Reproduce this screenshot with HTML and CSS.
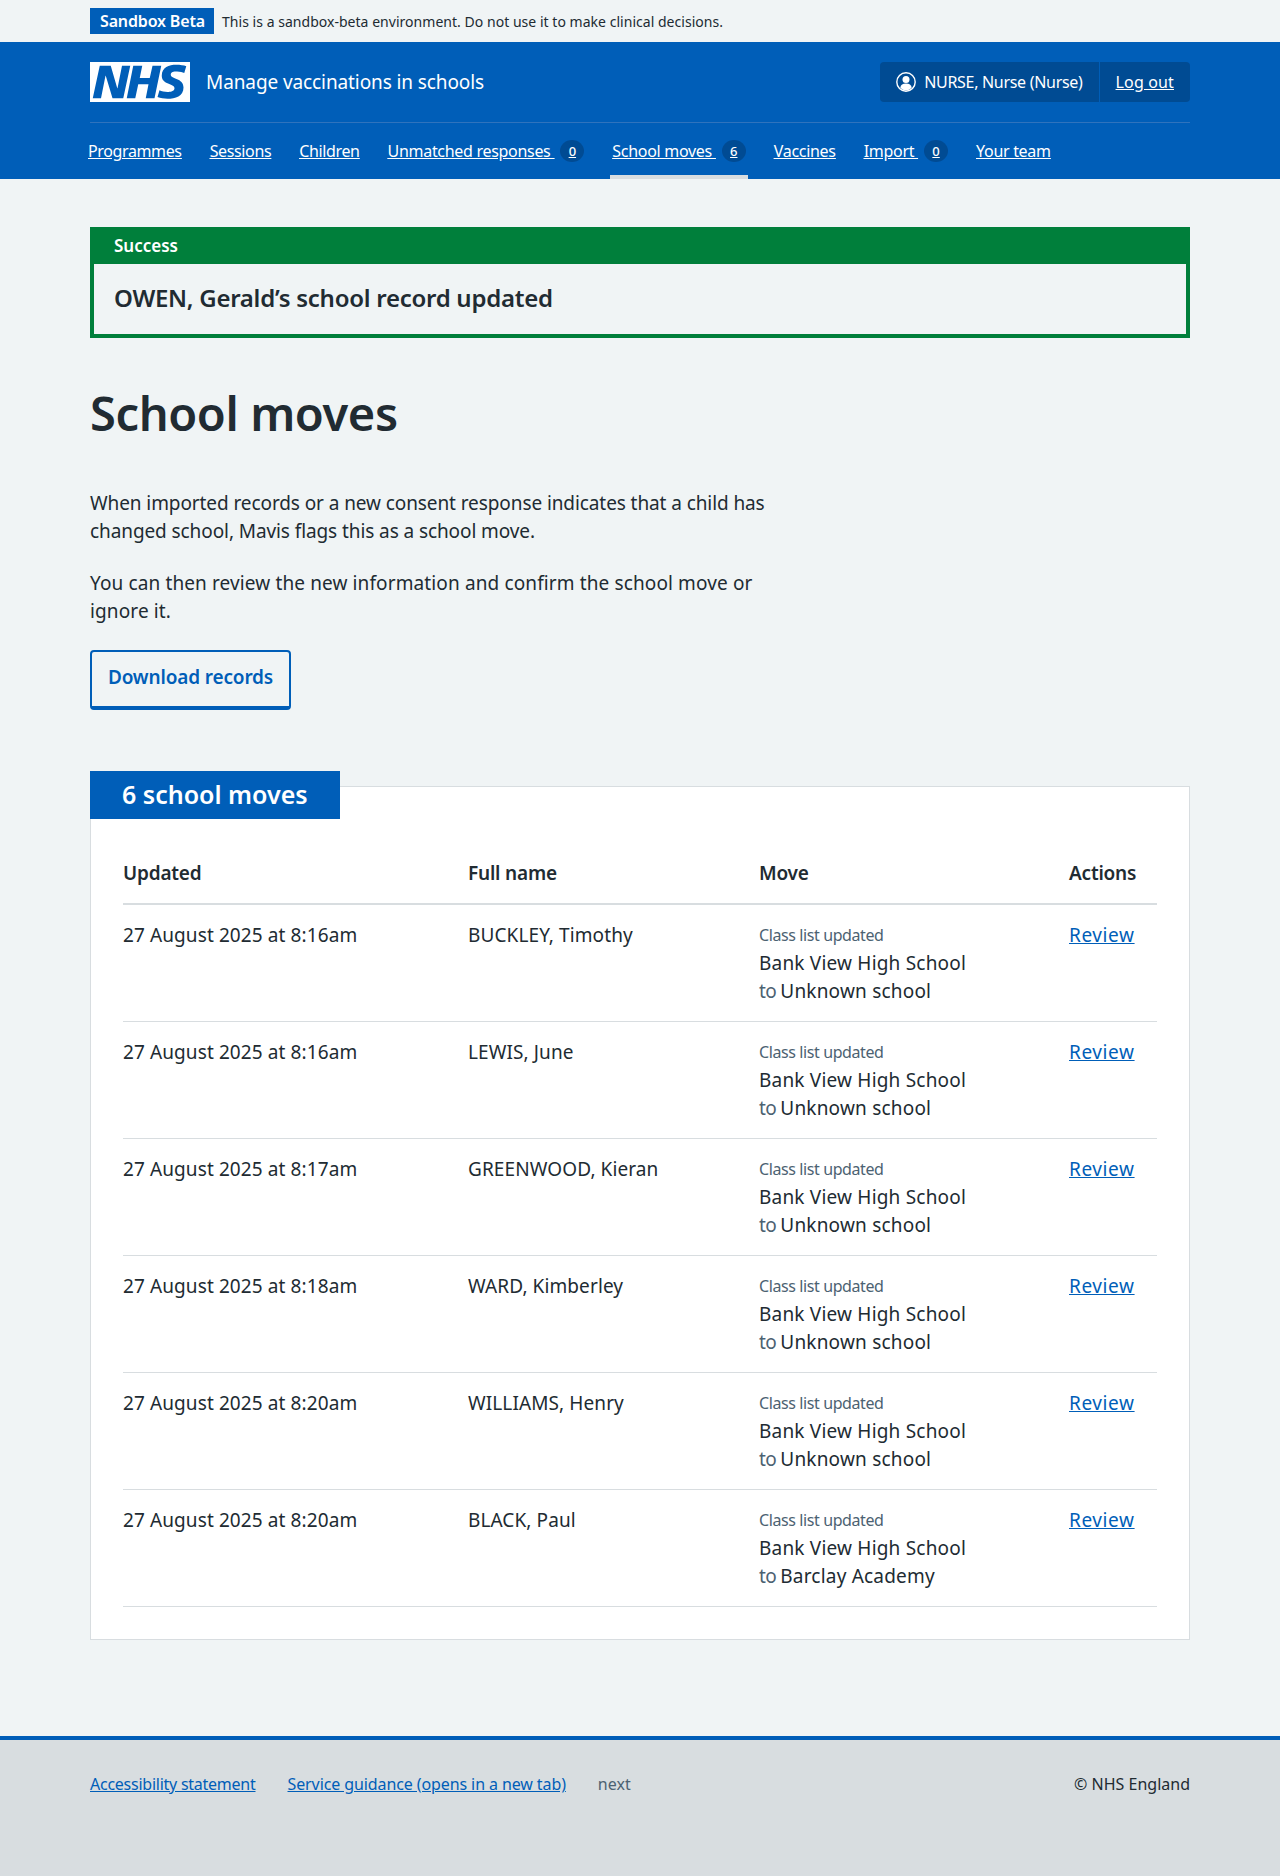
FILE: index.html
```html
<!DOCTYPE html>
<html lang="en">
<head>
<meta charset="utf-8">
<title>School moves</title>
<link rel="stylesheet" href="styles.css">
</head>
<body>
<div class="env">
  <div class="wrap env-in">
    <strong class="env-tag">Sandbox Beta</strong>
    <span class="env-text">This is a sandbox-beta environment. Do not use it to make clinical decisions.</span>
  </div>
</div>
<header class="header">
  <div class="wrap">
    <div class="head-top">
      <a class="brand" href="#">
        <svg class="logo" viewBox="0 0 40 16" aria-hidden="true"><path fill="#fff" d="M0 0h40v16H0z"/><path fill="#005eb8" d="M3.9 1.5h4.4l2.6 9h.1l1.8-9h3.3l-2.8 13H9l-2.7-9h-.1l-1.8 9H1.1M17.3 1.5h3.6l-1 4.9h4L25 1.5h3.5l-2.7 13h-3.5l1.1-5.6h-4.1l-1.2 5.6h-3.4M37.7 4.4c-.7-.3-1.6-.6-2.9-.6-1.4 0-2.5.2-2.5 1.3 0 1.8 5.1 1.2 5.1 5.1 0 3.6-3.3 4.5-6.4 4.5-1.3 0-2.9-.3-4-.7l.8-2.7c.7.4 2.1.7 3.2.7s2.8-.2 2.8-1.5c0-2.1-5.1-1.3-5.1-5 0-3.4 2.9-4.4 5.8-4.4 1.6 0 3.1.2 4 .6"/></svg>
        <span class="service">Manage vaccinations in schools</span>
      </a>
      <div class="account">
        <span class="account-item account-name">
          <svg class="account-icon" viewBox="0 0 20 20" aria-hidden="true"><circle cx="10" cy="10" r="9.200" fill="none" stroke="#fff" stroke-width="1.400"/><circle cx="10" cy="7.400" r="3.500" fill="#fff"/><path fill="#fff" d="M4.300 15.800c.4-3 2.400-4.300 5.700-4.300s5.300 1.300 5.700 4.300A8 8 0 0 1 10 18.500a8 8 0 0 1-5.700-2.700z"/></svg>
          NURSE, Nurse (Nurse)
        </span>
        <a class="account-item account-link" href="#">Log out</a>
      </div>
    </div>
    <nav class="nav">
      <a class="nav-item" href="#"><span class="nav-label">Programmes</span></a>
      <a class="nav-item" href="#"><span class="nav-label">Sessions</span></a>
      <a class="nav-item" href="#"><span class="nav-label">Children</span></a>
      <a class="nav-item" href="#"><span class="nav-label">Unmatched responses </span><span class="count">0</span></a>
      <a class="nav-item is-active" href="#"><span class="nav-label">School moves </span><span class="count">6</span></a>
      <a class="nav-item" href="#"><span class="nav-label">Vaccines</span></a>
      <a class="nav-item" href="#"><span class="nav-label">Import </span><span class="count">0</span></a>
      <a class="nav-item" href="#"><span class="nav-label">Your team</span></a>
    </nav>
  </div>
</header>
<main class="wrap main">
  <div class="banner">
    <div class="banner-head">Success</div>
    <div class="banner-body">OWEN, Gerald’s school record updated</div>
  </div>
  <h1 class="title">School moves</h1>
  <div class="intro">
    <p class="intro-a">When imported records or a new consent response indicates that a child has changed school, Mavis flags this as a school move.</p>
    <p class="intro-b">You can then review the new information and confirm the school move or ignore it.</p>
  </div>
  <a class="btn" href="#">Download records</a>
  <section class="card">
    <h2 class="card-head">6 school moves</h2>
    <table class="table">
      <thead>
        <tr><th class="c1">Updated</th><th class="c2">Full name</th><th class="c3">Move</th><th class="c4">Actions</th></tr>
      </thead>
      <tbody>
        <tr><td>27 August 2025 at 8:16am</td><td>BUCKLEY, Timothy</td><td class="move"><span class="sec small">Class list updated</span><br>Bank View High School<br><span class="sec to">to</span> Unknown school</td><td><a class="review" href="#">Review</a></td></tr>
        <tr><td>27 August 2025 at 8:16am</td><td>LEWIS, June</td><td class="move"><span class="sec small">Class list updated</span><br>Bank View High School<br><span class="sec to">to</span> Unknown school</td><td><a class="review" href="#">Review</a></td></tr>
        <tr><td>27 August 2025 at 8:17am</td><td>GREENWOOD, Kieran</td><td class="move"><span class="sec small">Class list updated</span><br>Bank View High School<br><span class="sec to">to</span> Unknown school</td><td><a class="review" href="#">Review</a></td></tr>
        <tr><td>27 August 2025 at 8:18am</td><td>WARD, Kimberley</td><td class="move"><span class="sec small">Class list updated</span><br>Bank View High School<br><span class="sec to">to</span> Unknown school</td><td><a class="review" href="#">Review</a></td></tr>
        <tr><td>27 August 2025 at 8:20am</td><td>WILLIAMS, Henry</td><td class="move"><span class="sec small">Class list updated</span><br>Bank View High School<br><span class="sec to">to</span> Unknown school</td><td><a class="review" href="#">Review</a></td></tr>
        <tr><td>27 August 2025 at 8:20am</td><td>BLACK, Paul</td><td class="move"><span class="sec small">Class list updated</span><br>Bank View High School<br><span class="sec to">to</span> Barclay Academy</td><td><a class="review" href="#">Review</a></td></tr>
      </tbody>
    </table>
  </section>
</main>
<footer class="footer">
  <div class="wrap foot-in">
    <div class="foot-links">
      <a class="foot-a" href="#">Accessibility statement</a>
      <a class="foot-b" href="#">Service guidance (opens in a new tab)</a>
      <span class="foot-ver">next</span>
    </div>
    <span class="foot-copy">© NHS England</span>
  </div>
</footer>
</body>
</html>
```
FILE: styles.css
```css
* { box-sizing: border-box; }
html, body { margin: 0; padding: 0; }
body {
  background: #f0f4f5;
  color: #212b32;
  font-family: "Noto Sans", "Liberation Sans", sans-serif;
  font-size: 19px;
  line-height: 28px;
}
a { color: #005eb8; }
.wrap { width: 1100px; margin: 0 auto; }

.env { height: 42px; }
.env-in { display: flex; align-items: center; gap: 8px; padding-top: 8px; height: 34px; }
.env-tag { background: #005eb8; color: #fff; font-size: 16px; line-height: 26px; font-weight: 600; padding: 0 9px 0 10px; letter-spacing: -0.15px; }
.env-text { font-size: 14px; line-height: 28px; margin-top: 2px; letter-spacing: 0.03px; }

.header { background: #005eb8; height: 137px; color: #fff; }
.header a { color: #fff; }
.head-top { display: flex; justify-content: space-between; padding: 20px 0; height: 81px; border-bottom: 1px solid #2f73bd; }
.brand { display: flex; align-items: center; gap: 16px; text-decoration: none; }
.logo { width: 100px; height: 40px; display: block; }
.service { font-size: 19px; letter-spacing: -0.1px; }
.account { display: flex; background: #004b93; border-radius: 4px; height: 40px; font-size: 16px; }
.account-item { display: flex; align-items: center; gap: 8px; padding: 0 16px; }
.account-name { letter-spacing: -0.3px; }
.account-link { border-left: 1px solid #005eb8; letter-spacing: 0.15px; }
.account-icon { width: 20px; height: 20px; }

.nav { display: flex; gap: 24px; margin-left: -4px; height: 56px; font-size: 16px; letter-spacing: -0.3px; }
.nav-item { display: flex; align-items: center; height: 56px; padding: 4px 2px 0; border-bottom: 4px solid transparent; }
.nav-item:nth-child(-n+3) { letter-spacing: -0.37px; }
.nav-item.is-active { border-bottom-color: #d8dde0; }
.nav-label { text-decoration: underline; white-space: pre; }
.count { width: 24px; height: 22px; border-radius: 50%; background: #004b93; font-size: 13px; font-weight: 500; line-height: 22px; letter-spacing: 0; text-align: center; margin-left: 6px; }

.main { padding-top: 48px; padding-bottom: 96px; }
.banner { border: 4px solid #007f3b; }
.banner-head { background: #007f3b; color: #fff; font-size: 17px; font-weight: 600; line-height: 37px; height: 37px; margin: -4px -4px 0; padding-left: 24px; }
.banner-body { font-size: 24px; font-weight: 600; line-height: 32px; padding: 18px 20px 20px; letter-spacing: -0.27px; }
.title { font-size: 47px; line-height: 56px; font-weight: 600; margin: 47px 0 48px; letter-spacing: -0.4px; }
.intro { width: 700px; margin-bottom: 25px; }
.intro p { margin: 0; }
.intro-a { letter-spacing: -0.09px; padding-bottom: 24px; }
.intro-b { letter-spacing: 0.12px; }
.btn { display: block; width: 201px; height: 60px; border: 2px solid #005eb8; border-bottom-width: 4px; border-radius: 4px; font-size: 19px; font-weight: 600; text-align: center; line-height: 51px; text-decoration: none; margin-bottom: 76px; letter-spacing: -0.15px; }
.card { position: relative; background: #fff; border: 1px solid #d8dde0; padding: 48px 32px 32px; height: 854px; }
.card-head { position: absolute; left: -1px; top: -16px; margin: 0; width: 250px; height: 48px; background: #005eb8; color: #fff; font-size: 25px; line-height: 46px; font-weight: 600; padding-left: 32px; }
.table { width: 100%; border-collapse: collapse; table-layout: fixed; }
.table th { text-align: left; font-weight: 600; height: 69px; padding: 0 0 16px; vertical-align: bottom; border-bottom: 2px solid #d8dde0; letter-spacing: -0.2px; }
.table td { vertical-align: top; padding: 16px 0 12px; height: 117px; border-bottom: 1px solid #d8dde0; letter-spacing: 0.1px; }
.c1 { width: 345px; }
.c2 { width: 291px; }
.c3 { width: 310px; }
.table .move { padding-top: 15px; letter-spacing: 0.2px; }
.sec { color: #4c6272; }
.small { font-size: 16px; letter-spacing: -0.4px; }
.to { letter-spacing: -0.6px; margin-right: -1px; }
.review { letter-spacing: 0.6px; }

.footer { background: #d8dde0; border-top: 4px solid #005eb8; height: 140px; font-size: 16px; }
.foot-in { display: flex; justify-content: space-between; padding-top: 30px; }
.foot-links { display: flex; gap: 32px; }
.foot-a { letter-spacing: -0.25px; }
.foot-b { letter-spacing: -0.1px; }
.foot-ver { color: #4c6272; }
```
